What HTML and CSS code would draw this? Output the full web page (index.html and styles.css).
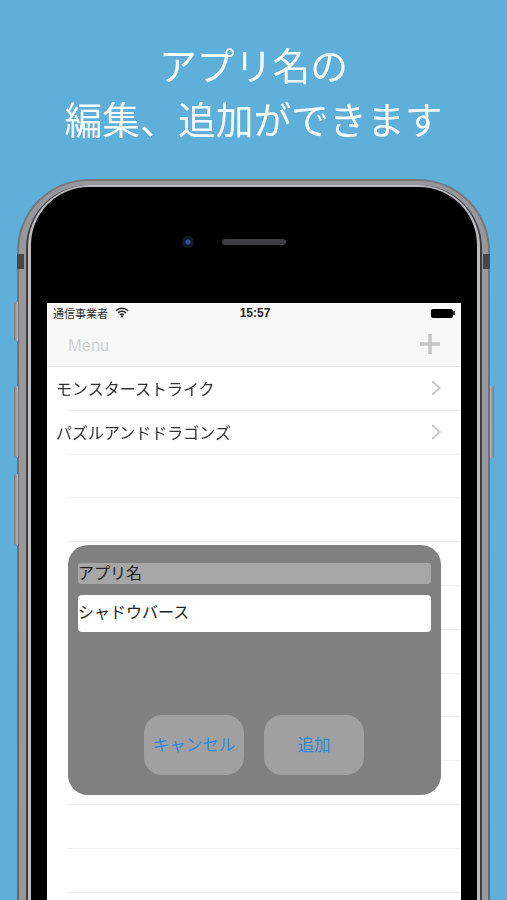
FILE: index.html
```html
<!DOCTYPE html>
<html lang="ja">
<head>
<meta charset="utf-8">
<title>アプリ名の編集、追加ができます</title>
<link rel="stylesheet" href="styles.css">
</head>
<body>
<main class="page">
  <h1 class="headline">アプリ名の<br>編集、追加ができます</h1>
  <div class="phone">
    <span class="band band-left"></span>
    <span class="band band-right"></span>
    <span class="key key-mute"></span>
    <span class="key key-up"></span>
    <span class="key key-down"></span>
    <span class="key key-power"></span>
    <div class="ring-light">
      <div class="ring-dark">
        <div class="ring-edge">
          <div class="bezel">
            <div class="earpiece">
              <span class="camera"></span>
              <span class="speaker"></span>
            </div>
            <div class="screen">
              <header class="chrome">
                <div class="status">
                  <div class="carrier">
                    <span>通信事業者</span>
                    <svg class="wifi" viewBox="0 0 14 11" aria-hidden="true">
                      <path d="M1 3.7a8.6 8.6 0 0 1 12 0" />
                      <path d="M3.1 5.9a5.6 5.6 0 0 1 7.8 0" />
                      <path d="M5.1 8a2.8 2.8 0 0 1 3.8 0" />
                      <circle cx="7" cy="9.6" r="1.1" />
                    </svg>
                  </div>
                  <div class="clock">15:57</div>
                  <div class="battery-wrap"><span class="battery"></span><span class="battery-tip"></span></div>
                </div>
                <nav class="navbar">
                  <span class="nav-title">Menu</span>
                  <svg class="plus" viewBox="0 0 20 20" aria-hidden="true"><path d="M10 0v20M0 10h20" /></svg>
                </nav>
              </header>
              <ul class="list">
                <li class="row"><span>モンスターストライク</span><svg class="chevron" viewBox="0 0 10 16" aria-hidden="true"><path d="M1.2 1l7.4 7-7.4 7" /></svg></li>
                <li class="row"><span>パズルアンドドラゴンズ</span><svg class="chevron" viewBox="0 0 10 16" aria-hidden="true"><path d="M1.2 1l7.4 7-7.4 7" /></svg></li>
                <li class="row"></li><li class="row"></li><li class="row"></li><li class="row"></li>
                <li class="row"></li><li class="row"></li><li class="row"></li><li class="row"></li>
                <li class="row"></li><li class="row"></li><li class="row"></li><li class="row"></li>
              </ul>
              <section class="dialog">
                <div class="dialog-label">アプリ名</div>
                <div class="dialog-input">シャドウバース</div>
                <div class="dialog-actions">
                  <button class="dialog-btn" type="button">キャンセル</button>
                  <button class="dialog-btn" type="button">追加</button>
                </div>
              </section>
            </div>
          </div>
        </div>
      </div>
    </div>
  </div>
</main>
</body>
</html>
```

FILE: styles.css
```css
* { box-sizing: border-box; }
html, body { margin: 0; padding: 0; }
body {
  width: 507px;
  height: 900px;
  overflow: hidden;
  background: #5fafdb;
  font-family: "Noto Sans CJK JP", "Noto Sans", sans-serif;
}
.page {
  height: 900px;
  overflow: hidden;
  filter: blur(0.35px);
}
.headline {
  margin: 0;
  padding-top: 37px;
  height: 179px;
  text-align: center;
  color: #f6fafc;
  font-size: 37.8px;
  line-height: 53.5px;
  font-weight: 400;
}
.phone {
  position: relative;
  width: 473px;
  height: 900px;
  margin-left: 17px;
  padding: 2px 2px 0;
  border-radius: 72px 72px 0 0;
  background: linear-gradient(#77777c, #5f5f64);
}
.ring-light {
  height: 100%;
  padding: 4px 6px 0 7px;
  border-radius: 70px 70px 0 0;
  background: #98989c;
}
.ring-dark {
  height: 100%;
  padding: 0 2px;
  border-radius: 63px 63px 0 0;
  background: #3d3d40;
}
.ring-edge {
  height: 100%;
  padding: 2px 3px 0;
  border-radius: 62px 62px 0 0;
  background: #bcbcc0;
}
.bezel {
  height: 100%;
  padding: 0 16px;
  border-radius: 58px 58px 0 0;
  background: #000;
}
.earpiece {
  display: grid;
  grid-template-columns: 1fr 64px 1fr;
  align-items: center;
  height: 116px;
  padding-bottom: 6px;
}
.camera {
  justify-self: end;
  width: 12px;
  height: 12px;
  margin-right: 28px;
  border-radius: 50%;
  background: radial-gradient(circle, #2f4f9c 0 2px, #141c33 3px, #14161c 6px);
}
.speaker {
  grid-column: 2;
  height: 6px;
  border-radius: 3px;
  background: #3e3e40;
}
.band { position: absolute; top: 75px; width: 7px; height: 15px; background: #47474b; }
.band-left { left: 0; }
.band-right { right: 0; }
.key {
  position: absolute;
  width: 4px;
  background: linear-gradient(90deg, #77777c, #bcbcc0);
  border-radius: 2px 0 0 2px;
}
.key-mute { left: -3px; top: 123px; height: 39px; }
.key-up { left: -3px; top: 207px; height: 71px; }
.key-down { left: -3px; top: 295px; height: 71px; }
.key-power {
  right: -4px;
  top: 207px;
  height: 72px;
  background: linear-gradient(90deg, #bcbcc0, #77777c);
  border-radius: 0 2px 2px 0;
}
.screen {
  position: relative;
  width: 414px;
  height: 700px;
  overflow: hidden;
  background: #fff;
}
.chrome {
  height: 64px;
  background: #f8f8f8;
  border-bottom: 1px solid #e3e3e3;
}
.status {
  display: grid;
  grid-template-columns: 1fr auto 1fr;
  align-items: center;
  height: 20px;
  padding: 0 6px;
  color: #222;
}
.carrier {
  display: flex;
  align-items: center;
  gap: 7px;
  font-size: 11px;
  color: #333;
}
.wifi { width: 14px; height: 11px; margin-top: -2px; }
.wifi path { fill: none; stroke: #222; stroke-width: 1.5; }
.wifi circle { fill: #222; }
.clock {
  font-family: "Liberation Sans", sans-serif;
  font-size: 12px;
  font-weight: 700;
  margin-left: 2px;
}
.battery-wrap {
  justify-self: end;
  display: flex;
  align-items: center;
}
.battery {
  width: 22px;
  height: 9px;
  border-radius: 2px;
  background: #000;
}
.battery-tip {
  width: 2px;
  height: 4px;
  background: #333;
}
.navbar {
  display: flex;
  align-items: center;
  justify-content: space-between;
  height: 43px;
  padding: 0 21px;
}
.nav-title {
  margin-top: 1px;
  font-family: "Liberation Sans", sans-serif;
  font-size: 16.5px;
  color: #d2d2d2;
}
.plus { width: 20px; height: 20px; margin-top: -1px; }
.plus path { fill: none; stroke: #c6c6c6; stroke-width: 3.6; }
.list {
  margin: 0;
  padding: 0;
  list-style: none;
}
.row {
  display: flex;
  align-items: center;
  justify-content: space-between;
  height: 43.8px;
  padding: 0 20px 2px 9px;
  font-size: 16px;
  color: #333;
  background: linear-gradient(#f0f0f0, #f0f0f0) 21px 100% / 393px 1px no-repeat;
}
.chevron { width: 10px; height: 16px; }
.chevron path { fill: none; stroke: #c4c4c8; stroke-width: 1.8; }
.dialog {
  position: absolute;
  left: 21px;
  top: 242px;
  width: 373px;
  height: 250px;
  display: flex;
  flex-direction: column;
  padding: 18px 10px 20px;
  border-radius: 20px;
  background: #808080;
}
.dialog-label {
  height: 21px;
  line-height: 19px;
  border-radius: 3px;
  background: #a6a6a6;
  font-size: 16px;
  color: #222;
}
.dialog-input {
  height: 37px;
  line-height: 33px;
  margin-top: 11px;
  border-radius: 4px;
  background: #fff;
  font-size: 16px;
  color: #222;
}
.dialog-actions {
  display: flex;
  gap: 20px;
  margin-top: auto;
  padding-left: 66px;
}
.dialog-btn {
  width: 100px;
  height: 60px;
  padding: 0 0 2px;
  border: 0;
  border-radius: 18px;
  background: #a0a0a0;
  font-family: inherit;
  font-size: 16.5px;
  color: #2e86de;
}
```
